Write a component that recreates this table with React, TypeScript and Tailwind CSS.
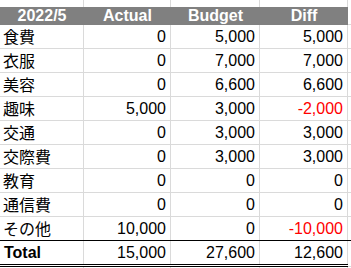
import React from "react";

type Row = { label: string; actual: string; budget: string; diff: string; neg?: boolean };

const rows: Row[] = [
    { label: "食費", actual: "0", budget: "5,000", diff: "5,000" },
    { label: "衣服", actual: "0", budget: "7,000", diff: "7,000" },
    { label: "美容", actual: "0", budget: "6,600", diff: "6,600" },
    { label: "趣味", actual: "5,000", budget: "3,000", diff: "-2,000", neg: true },
    { label: "交通", actual: "0", budget: "3,000", diff: "3,000" },
    { label: "交際費", actual: "0", budget: "3,000", diff: "3,000" },
    { label: "教育", actual: "0", budget: "0", diff: "0" },
    { label: "通信費", actual: "0", budget: "0", diff: "0" },
    { label: "その他", actual: "10,000", budget: "0", diff: "-10,000", neg: true },
];

const cols = "grid grid-cols-[84px_87px_89px_88px_1fr]";
const line = "border-r border-[#dadada]";

export default function App() {
    return (
        <div className="w-[351px] h-[268px] overflow-hidden bg-white text-[16px] text-black" style={{ fontFamily: '"Liberation Sans", Arial, "Noto Sans CJK JP", sans-serif' }}>
            {/* partial row above */}
            <div className={`${cols} h-[7px]`}>
                <div className={line} />
                <div className={line} />
                <div className={line} />
                <div className={line} />
                <div />
            </div>

            {/* header */}
            <div className={`${cols} h-[18px]`}>
                <div className="col-span-4 grid grid-cols-[84px_87px_89px_88px] bg-[#808080] text-white font-bold leading-[18px]">
                    <div className="text-center">2022/5</div>
                    <div className="text-center">Actual</div>
                    <div className="text-center">Budget</div>
                    <div className="text-center">Diff</div>
                </div>
                <div className="border-b border-[#dadada]" />
            </div>

            {rows.map((r, i) => (
                <div key={r.label} className={`${cols} h-[24px] border-b ${i === rows.length - 1 ? "border-black" : "border-[#dadada]"}`}>
                    <div className={`${line} pl-[3px] leading-[23px]`} style={{ fontFamily: '"Noto Sans CJK JP", sans-serif' }}>
                        {r.label}
                    </div>
                    <div className={`${line} text-right pr-[4px] leading-[23px]`}>{r.actual}</div>
                    <div className={`${line} text-right pr-[4px] leading-[23px]`}>{r.budget}</div>
                    <div className={`${line} text-right pr-[4px] leading-[23px] ${r.neg ? "text-[#ff0000]" : ""}`}>{r.diff}</div>
                    <div />
                </div>
            ))}

            {/* total */}
            <div className={`${cols} h-[26px]`}>
                <div className="col-span-4 grid grid-cols-[84px_87px_89px_88px] border-b-[3px] border-double border-black">
                    <div className={`${line} pl-[4px] font-bold leading-[23px]`}>Total</div>
                    <div className={`${line} text-right pr-[4px] leading-[23px]`}>15,000</div>
                    <div className={`${line} text-right pr-[4px] leading-[23px]`}>27,600</div>
                    <div className={`${line} text-right pr-[4px] leading-[23px]`}>12,600</div>
                </div>
                <div className="border-b border-[#dadada]" />
            </div>

            {/* partial row below */}
            <div className={`${cols} h-[10px]`}>
                <div className={line} />
                <div className={line} />
                <div className={line} />
                <div className={line} />
                <div />
            </div>
        </div>
    );
}
